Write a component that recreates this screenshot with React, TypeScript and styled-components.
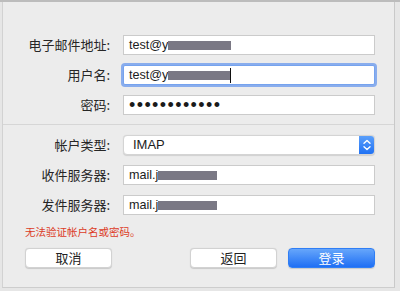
import React from 'react';
import styled, { createGlobalStyle } from 'styled-components';

const GlobalStyle = createGlobalStyle`
  html, body {
    margin: 0;
    padding: 0;
    width: 400px;
    height: 291px;
    overflow: hidden;
    background: #e4e4e4;
  }
  * {
    box-sizing: border-box;
  }
`;

const Window = styled.div`
  width: 400px;
  height: 291px;
  border-top: 2px solid #bcbcbc;
  background: #e6e6e6;
`;

const Sheet = styled.div`
  margin-left: 2px;
  width: 393px;
  height: 286px;
  background: #ececec;
  border-left: 1px solid #d2d2d2;
  border-right: 1px solid #c9c9c9;
  border-bottom: 1px solid #cdcdcd;
  padding-top: 33px;
  font-family: "Noto Sans CJK SC", "Liberation Sans", sans-serif;
`;

const FormGrid = styled.div`
  display: grid;
  grid-template-columns: 107px 252px;
  column-gap: 13px;
  row-gap: 10px;
  align-items: center;
`;

const Label = styled.label`
  font-size: 13px;
  line-height: 20px;
  color: #262626;
  text-align: right;
  white-space: nowrap;
`;

const Field = styled.div<{ $focused?: boolean }>`
  height: 20px;
  background: #ffffff;
  border: 1px solid ${p => (p.$focused ? '#76a3ee' : '#cbcbcb')};
  border-radius: ${p => (p.$focused ? '2px' : '0')};
  box-shadow: ${p => (p.$focused ? '0 0 0 2px rgba(104, 152, 238, 0.75)' : 'none')};
  display: flex;
  align-items: center;
  padding-left: 5px;
  font-family: "Liberation Sans", Arial, sans-serif;
  font-size: 12.6px;
  color: #1c1c1c;
  white-space: nowrap;
  overflow: hidden;
`;

// grey box that hides the rest of the address
const Redacted = styled.span<{ $w: number }>`
  display: inline-block;
  width: ${p => p.$w}px;
  height: 9px;
  margin-top: 1px;
  background: #7a7884;
`;

const Caret = styled.span`
  display: inline-block;
  width: 1px;
  height: 15px;
  background: #111;
`;

const Dots = styled.span`
  font-size: 18px;
  line-height: 18px;
  letter-spacing: 1.4px;
  color: #1a1a1a;
`;

const Separator = styled.div`
  height: 1px;
  background: #d6d6d6;
  margin: 9px 0 10px;
`;

const Select = styled.div`
  height: 20px;
  display: flex;
  background: #ffffff;
  border: 1px solid #d4d4d4;
  border-radius: 4px;
  box-shadow: 0 0.5px 1px rgba(0, 0, 0, 0.12);
  overflow: hidden;
  font-family: "Liberation Sans", Arial, sans-serif;
  font-size: 13px;
  color: #1c1c1c;
`;

const SelectValue = styled.div`
  flex: 1;
  padding-left: 9px;
  line-height: 18px;
`;

const Stepper = styled.div`
  width: 16px;
  margin: -1px -1px -1px 0;
  background: linear-gradient(#5ea2fb, #1d6ff3);
  display: flex;
  align-items: center;
  justify-content: center;
`;

const ErrorText = styled.div`
  margin: 10px 0 0 22px;
  font-size: 10.5px;
  line-height: 14px;
  color: #dc3b26;
`;

const ButtonRow = styled.div`
  display: flex;
  margin: 9px 19px 0 22px;
  gap: 11px;
`;

const Button = styled.button<{ $primary?: boolean }>`
  width: 87px;
  height: 20px;
  padding: 0;
  border-radius: 4px;
  font-family: "Noto Sans CJK SC", sans-serif;
  font-size: 13px;
  line-height: 18px;
  border: 1px solid ${p => (p.$primary ? '#2f7ef5' : '#d2d2d2')};
  background: ${p => (p.$primary ? 'linear-gradient(#66a6fb, #1f6ff4)' : '#ffffff')};
  color: ${p => (p.$primary ? '#ffffff' : '#222222')};
  box-shadow: 0 0.5px 1px rgba(0, 0, 0, 0.15);
`;

const Spacer = styled.div`
  flex: 1;
`;

const StepperIcon = () => (
  <svg width="10" height="14" viewBox="0 0 10 14">
    <path d="M2 5.2 L5 2.4 L8 5.2" fill="none" stroke="#fff" strokeWidth="1.4" strokeLinecap="round" strokeLinejoin="round" />
    <path d="M2 8.8 L5 11.6 L8 8.8" fill="none" stroke="#fff" strokeWidth="1.4" strokeLinecap="round" strokeLinejoin="round" />
  </svg>
);

export default function App() {
  return (
    <>
      <GlobalStyle />
      <Window>
        <Sheet>
          <FormGrid>
            <Label>电子邮件地址:</Label>
            <Field>
              test@y
              <Redacted $w={63} />
            </Field>
            <Label>用户名:</Label>
            <Field $focused>
              test@y
              <Redacted $w={62} />
              <Caret />
            </Field>
            <Label>密码:</Label>
            <Field>
              <Dots>••••••••••••</Dots>
            </Field>
          </FormGrid>
          <Separator />
          <FormGrid>
            <Label>帐户类型:</Label>
            <Select>
              <SelectValue>IMAP</SelectValue>
              <Stepper>
                <StepperIcon />
              </Stepper>
            </Select>
            <Label>收件服务器:</Label>
            <Field>
              mail.j
              <Redacted $w={59} />
            </Field>
            <Label>发件服务器:</Label>
            <Field>
              mail.j
              <Redacted $w={59} />
            </Field>
          </FormGrid>
          <ErrorText>无法验证帐户名或密码。</ErrorText>
          <ButtonRow>
            <Button>取消</Button>
            <Spacer />
            <Button>返回</Button>
            <Button $primary>登录</Button>
          </ButtonRow>
        </Sheet>
      </Window>
    </>
  );
}
